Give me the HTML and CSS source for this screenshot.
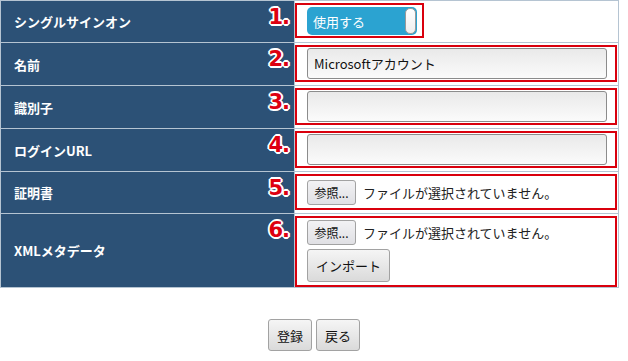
FILE: index.html
```html
<!DOCTYPE html>
<html lang="ja">
<head>
  <meta charset="UTF-8">
  <title>シングルサインオン設定</title>
  <link rel="stylesheet" href="styles.css">
</head>
<body>

  <!-- Settings table -->
  <table class="sso-table">
    <tr class="row-first">
      <th>シングルサインオン<span class="step">1.</span></th>
      <td>
        <div class="mark mark-toggle">
          <div class="toggle">
            <span class="toggle-label">使用する</span>
            <span class="toggle-knob"></span>
          </div>
        </div>
      </td>
    </tr>
    <tr class="row-short">
      <th>名前<span class="step">2.</span></th>
      <td>
        <div class="mark">
          <input class="text-input" type="text" value="Microsoftアカウント">
        </div>
      </td>
    </tr>
    <tr class="row-short">
      <th>識別子<span class="step">3.</span></th>
      <td>
        <div class="mark">
          <input class="text-input" type="text" value="">
        </div>
      </td>
    </tr>
    <tr class="row-short">
      <th>ログインURL<span class="step">4.</span></th>
      <td>
        <div class="mark">
          <input class="text-input" type="text" value="">
        </div>
      </td>
    </tr>
    <tr class="row-file">
      <th>証明書<span class="step">5.</span></th>
      <td>
        <div class="mark mark-file">
          <div class="file-line">
            <button class="btn btn-browse">参照...</button>
            <span class="file-name">ファイルが選択されていません。</span>
          </div>
        </div>
      </td>
    </tr>
    <tr class="row-tall">
      <th>XMLメタデータ<span class="step">6.</span></th>
      <td>
        <div class="mark mark-file mark-tall">
          <div class="file-line">
            <button class="btn btn-browse">参照...</button>
            <span class="file-name">ファイルが選択されていません。</span>
          </div>
          <button class="btn btn-import">インポート</button>
        </div>
      </td>
    </tr>
  </table>

  <!-- Form actions -->
  <div class="actions">
    <button class="btn btn-action">登録</button>
    <button class="btn btn-action">戻る</button>
  </div>

</body>
</html>
```

FILE: styles.css
```css
/* Basic Reset */
* {
  margin: 0;
  padding: 0;
  box-sizing: border-box;
}

body {
  font-family: "Noto Sans CJK JP", "DejaVu Sans", sans-serif;
  font-size: 13px;
  background-color: #fff;
  color: #222;
  width: 628px;
}

/* Settings table */
.sso-table {
  width: 619px;
  border-collapse: collapse;
  border: 1px solid #b5c4d2;
}

.sso-table th,
.sso-table td {
  border: 1px solid #b5c4d2;
}

.sso-table th {
  position: relative;
  width: 295px;
  background-color: #2c5176;
  color: #fff;
  font-size: 13px;
  font-weight: bold;
  text-align: left;
  padding: 0 0 0 13px;
}

.sso-table td {
  background-color: #fff;
  vertical-align: top;
  padding: 1px 1px 0 0;
}

.row-first {
  height: 42px;
}

.row-short {
  height: 43px;
}

.row-file {
  height: 42px;
}

.row-tall {
  height: 74px;
}

/* Step numbers */
.step {
  position: absolute;
  top: 4px;
  right: 5px;
  font-family: "DejaVu Sans", sans-serif;
  font-size: 21px;
  font-weight: bold;
  color: #dd0010;
  letter-spacing: -1px;
  text-shadow:
    -1px -1px 0 #fff, 1px -1px 0 #fff,
    -1px 1px 0 #fff, 1px 1px 0 #fff,
    0 -2px 0 #fff, 0 2px 0 #fff,
    -2px 0 0 #fff, 2px 0 0 #fff;
}

/* Red highlight box */
.mark {
  border: 2px solid #d9000d;
  padding: 1px 8px 1px 10px;
  margin-top: 1px;
}

.mark-toggle {
  display: inline-block;
  padding: 2px 5px 1px 10px;
}

.mark-file {
  padding: 3px 8px 3px 10px;
}

.mark-tall {
  padding: 1px 8px 2px 10px;
  height: 71px;
}

/* Toggle switch */
.toggle {
  display: flex;
  align-items: center;
  justify-content: space-between;
  width: 110px;
  height: 28px;
  background-color: #2ba3d1;
  border-radius: 5px;
  padding: 0 1px 0 6px;
}

.toggle-label {
  color: #fff;
  font-size: 13px;
}

.toggle-knob {
  width: 11px;
  height: 26px;
  background: linear-gradient(#ffffff, #eeeeee);
  border: 1px solid #9a9a9a;
  border-radius: 5px;
}

/* Text input */
.text-input {
  display: block;
  width: 300px;
  height: 31px;
  border: 1px solid #8c8c8c;
  border-radius: 3px;
  background: linear-gradient(#e9e9e9, #fbfbfb);
  font-family: "Noto Sans CJK JP", "DejaVu Sans", sans-serif;
  font-size: 13px;
  color: #111;
  padding: 0 6px;
}

/* Buttons */
.btn {
  font-family: "Noto Sans CJK JP", "DejaVu Sans", sans-serif;
  font-size: 13px;
  color: #111;
  background: linear-gradient(#f5f5f5, #dadada);
  border: 1px solid #a2a2a2;
  border-radius: 3px;
  cursor: pointer;
}

.file-line {
  display: flex;
  align-items: center;
  height: 26px;
}

.btn-browse {
  width: 49px;
  height: 25px;
  padding: 0;
  font-size: 12px;
  background: linear-gradient(#f2f2f4, #e0e0e4);
}

.file-name {
  margin-left: 7px;
  font-size: 13px;
}

.btn-import {
  display: block;
  width: 83px;
  height: 33px;
  margin-top: 4px;
}

/* Form actions */
.actions {
  display: flex;
  justify-content: center;
  gap: 4px;
  margin-top: 31px;
}

.btn-action {
  width: 44px;
  height: 32px;
  font-size: 13px;
}
```
